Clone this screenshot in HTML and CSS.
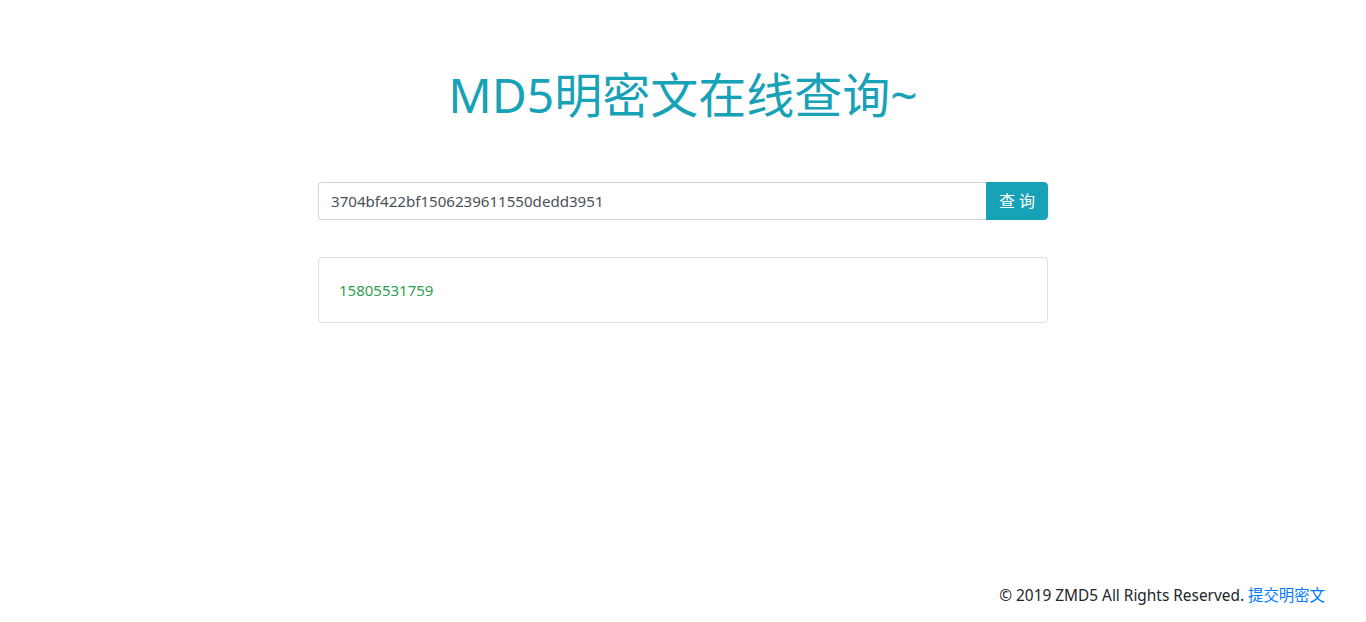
FILE: index.html
```html
<!DOCTYPE html>
<html lang="zh-CN">
<head>
<meta charset="utf-8">
<title>MD5明密文在线查询</title>
<link rel="stylesheet" href="styles.css">
</head>
<body>
<div class="page">
  <main class="container">
    <h1 class="title">MD5明密文在线查询~</h1>
    <form class="search">
      <input class="search-input" type="text" value="3704bf422bf1506239611550dedd3951">
      <button class="search-btn" type="button">查 询</button>
    </form>
    <div class="result">
      <span class="result-text">15805531759</span>
    </div>
  </main>
  <footer class="footer">© 2019 ZMD5 All Rights Reserved. <a class="footer-link" href="#">提交明密文</a></footer>
</div>
</body>
</html>
```
FILE: styles.css
```css
* { box-sizing: border-box; }
html, body { margin: 0; padding: 0; }
body {
  font-family: "Noto Sans", "Noto Sans CJK SC", sans-serif;
  font-size: 16px;
  line-height: 1.5;
  color: #212529;
  background: #fff;
}
.page {
  min-height: 100vh;
  display: flex;
  flex-direction: column;
}
.container {
  width: 730px;
  margin: 0 auto;
  padding-top: 66px;
}
.title {
  margin: 0;
  text-align: center;
  font-size: 48px;
  font-weight: 400;
  line-height: 1.2;
  color: #17a2b8;
}
.search {
  display: flex;
  margin-top: 58px;
}
.search-input {
  flex: 1;
  height: 38px;
  padding: 6px 12px;
  font: inherit;
  font-size: 15.1px;
  color: #495057;
  border: 1px solid #ced4da;
  border-right: none;
  border-radius: 4px 0 0 4px;
  outline: none;
}
.search-btn {
  width: 62px;
  height: 38px;
  border: 1px solid #17a2b8;
  background: #17a2b8;
  color: #fff;
  font: inherit;
  font-size: 16px;
  border-radius: 0 4px 4px 0;
  padding: 0;
}
.result {
  margin-top: 37px;
  border: 1px solid rgba(0,0,0,.125);
  border-radius: 4px;
  padding: 20px;
  height: 66px;
}
.result-text {
  color: #2e9e4f;
  font-size: 15px;
}
.footer {
  margin-top: auto;
  text-align: right;
  padding: 0 41px 15px 0;
  font-size: 15.4px;
}
.footer-link {
  color: #007bff;
  text-decoration: none;
}
```
